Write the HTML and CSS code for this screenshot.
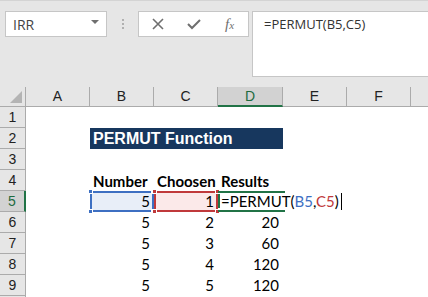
FILE: index.html
```html
<!DOCTYPE html>
<html>
<head>
    <meta charset="UTF-8">
    <title>PERMUT</title>
    <link rel="stylesheet" href="styles.css">
</head>
<body>
    <div class="toolbar">
        <div class="nameBox">
            <span>IRR</span>
            <span class="arrow"></span>
        </div>
        <div class="dots"><i></i><i></i><i></i></div>
        <div class="iconBox">
            <svg width="14" height="14" viewBox="0 0 14 14"><path d="M2 2L12 12M12 2L2 12" stroke="#6f6f6f" stroke-width="1.6" fill="none"/></svg>
            <svg width="16" height="14" viewBox="0 0 16 14"><path d="M2 7L6 11L14 3" stroke="#6f6f6f" stroke-width="2" fill="none"/></svg>
            <span class="fx">f<sub>x</sub></span>
        </div>
        <div class="formulaBox">=PERMUT(B5,C5)</div>
    </div>

    <div class="sheet">
        <!-- 列头 -->
        <div class="corner"><span></span></div>
        <div class="colHead">A</div>
        <div class="colHead">B</div>
        <div class="colHead">C</div>
        <div class="colHead sel">D</div>
        <div class="colHead">E</div>
        <div class="colHead">F</div>
        <div class="colHead rest"></div>

        <!-- 1 -->
        <div class="rowHead">1</div>
        <div class="cell"></div><div class="cell"></div><div class="cell"></div><div class="cell"></div><div class="cell"></div><div class="cell"></div><div class="cell"></div>

        <!-- 2 -->
        <div class="rowHead">2</div>
        <div class="cell"></div>
        <div class="cell title">PERMUT Function</div>
        <div class="cell"></div><div class="cell"></div><div class="cell"></div>

        <!-- 3 -->
        <div class="rowHead">3</div>
        <div class="cell"></div><div class="cell"></div><div class="cell"></div><div class="cell"></div><div class="cell"></div><div class="cell"></div><div class="cell"></div>

        <!-- 4 -->
        <div class="rowHead">4</div>
        <div class="cell"></div>
        <div class="cell head">Number</div>
        <div class="cell head">Choosen</div>
        <div class="cell head">Results</div>
        <div class="cell"></div><div class="cell"></div><div class="cell"></div>

        <!-- 5 -->
        <div class="rowHead sel">5</div>
        <div class="cell"></div>
        <div class="cell num refB">5<i class="h tl"></i><i class="h tr"></i><i class="h bl"></i><i class="h br"></i></div>
        <div class="cell num refC">1<i class="h tl"></i><i class="h tr"></i><i class="h bl"></i><i class="h br"></i></div>
        <div class="cell edit">=PERMUT(<b class="blue">B5</b>,<b class="red">C5</b>)<span class="caret"></span></div>
        <div class="cell"></div><div class="cell"></div>

        <!-- 6 -->
        <div class="rowHead">6</div>
        <div class="cell"></div>
        <div class="cell num">5</div><div class="cell num">2</div><div class="cell num">20</div>
        <div class="cell"></div><div class="cell"></div><div class="cell"></div>

        <!-- 7 -->
        <div class="rowHead">7</div>
        <div class="cell"></div>
        <div class="cell num">5</div><div class="cell num">3</div><div class="cell num">60</div>
        <div class="cell"></div><div class="cell"></div><div class="cell"></div>

        <!-- 8 -->
        <div class="rowHead">8</div>
        <div class="cell"></div>
        <div class="cell num">5</div><div class="cell num">4</div><div class="cell num">120</div>
        <div class="cell"></div><div class="cell"></div><div class="cell"></div>

        <!-- 9 -->
        <div class="rowHead">9</div>
        <div class="cell"></div>
        <div class="cell num">5</div><div class="cell num">5</div><div class="cell num">120</div>
        <div class="cell"></div><div class="cell"></div><div class="cell"></div>

        <!-- 10 -->
        <div class="rowHead"></div>
        <div class="cell"></div><div class="cell"></div><div class="cell"></div><div class="cell"></div><div class="cell"></div><div class="cell"></div><div class="cell"></div>
    </div>
</body>
</html>
```

FILE: styles.css
```css
*{
    padding: 0;
    margin: 0;
    box-sizing: border-box;
}
body{
    width: 428px;
    height: 297px;
    overflow: hidden;
    background: #fff;
    font-family: "Lato", "Liberation Sans", sans-serif;
}
.toolbar{
    height: 87px;
    background: #e6e6e6;
    border-top: 1px solid #d4d4d4;
    display: flex;
    align-items: flex-start;
    padding-top: 10px;
    padding-left: 5px;
}
.nameBox{
    width: 102px;
    height: 26px;
    background: #fff;
    border: 1px solid #c6c6c6;
    display: flex;
    align-items: center;
    justify-content: space-between;
    padding: 0 7px 0 7px;
    font-family: "Open Sans", sans-serif;
    font-size: 14px;
    color: #444;
}
.nameBox .arrow{
    width: 0;
    height: 0;
    border-left: 4px solid transparent;
    border-right: 4px solid transparent;
    border-top: 4px solid #6f6f6f;
    margin-top: -4px;
}
.dots{
    width: 31px;
    height: 26px;
    display: flex;
    flex-direction: column;
    align-items: center;
    justify-content: center;
    gap: 2px;
}
.dots i{
    width: 2px;
    height: 2px;
    background: #b0b0b0;
}
.iconBox{
    width: 111px;
    height: 26px;
    background: #fff;
    border: 1px solid #c6c6c6;
    display: flex;
    align-items: center;
    gap: 21px;
    padding-left: 12px;
}
.fx{
    font-family: "Liberation Serif", serif;
    font-style: italic;
    font-size: 15px;
    color: #6f6f6f;
    line-height: 1;
    margin-left: 2px;
}
.fx sub{
    font-size: 11px;
    vertical-align: 0;
}
.formulaBox{
    flex: 1;
    margin-left: 3px;
    height: 66px;
    background: #fff;
    border: 1px solid #c6c6c6;
    border-right: none;
    padding: 3px 0 0 11px;
    font-family: "Open Sans", sans-serif;
    font-size: 13px;
    color: #333;
}
.sheet{
    height: 210px;
    overflow: hidden;
    display: grid;
    grid-template-columns: 26px 64px 64px 64px 65px 64px 64px 1fr;
    grid-auto-rows: 21px;
    grid-template-rows: 20px;
}
.corner{
    background: #e6e6e6;
    border-right: 1px solid #ababab;
    border-bottom: 1px solid #ababab;
    position: relative;
}
.corner span{
    position: absolute;
    right: 3px;
    bottom: 3px;
    width: 0;
    height: 0;
    border-left: 12px solid transparent;
    border-bottom: 12px solid #b4b4b4;
}
.colHead{
    background: #e6e6e6;
    border-right: 1px solid #ababab;
    border-bottom: 1px solid #ababab;
    text-align: center;
    font-size: 14px;
    line-height: 19px;
    color: #222;
    font-family: "Liberation Sans", sans-serif;
}
.colHead.sel{
    background: #d2d2d2;
    border-bottom: 2px solid #217346;
    color: #1e6b3f;
}
.colHead.rest{
    border-right: none;
}
.rowHead{
    background: #e6e6e6;
    border-right: 1px solid #ababab;
    border-bottom: 1px solid #ababab;
    text-align: center;
    font-size: 14px;
    line-height: 20px;
    color: #222;
    font-family: "Liberation Sans", sans-serif;
}
.rowHead.sel{
    background: #d2d2d2;
    border-right: 2px solid #217346;
    color: #1e6b3f;
}
.cell{
    font-size: 15px;
    line-height: 21px;
    color: #000;
    white-space: nowrap;
    position: relative;
}
.title{
    grid-column: span 3;
    background: #17375e;
    color: #fff;
    font-weight: bold;
    padding-left: 3px;
    font-family: "Liberation Sans", sans-serif;
    font-size: 16px;
    line-height: 21px;
}
.head{
    font-weight: bold;
    padding-left: 3px;
    line-height: 23px;
}
.num{
    text-align: right;
    padding-right: 4px;
}
.refB{
    background: #e8eef8;
    border: 2px solid #3d6fc2;
    line-height: 17px;
    padding-right: 2px;
}
.refC{
    background: #fbe9e9;
    border: 2px solid #c0393b;
    line-height: 17px;
    padding-right: 2px;
}
.h{
    position: absolute;
    width: 5px;
    height: 5px;
    border: 1px solid #fff;
}
.refB .h{ background: #3d6fc2; }
.refC .h{ background: #c0393b; }
.tl{ left: -4px; top: -4px; }
.tr{ right: -4px; top: -4px; }
.bl{ left: -4px; bottom: -4px; }
.br{ right: -4px; bottom: -4px; }
.edit{
    grid-column: span 2;
    padding-left: 3px;
    line-height: 21px;
}
.edit::before{
    content: "";
    position: absolute;
    left: 0;
    right: 62px;
    top: 0;
    bottom: 0;
    border-top: 2px solid #217346;
    border-bottom: 2px solid #217346;
}
.edit::after{
    content: "";
    position: absolute;
    left: 0;
    top: 3px;
    width: 2px;
    height: 14px;
    background: #217346;
}
.edit b{
    font-weight: normal;
}
.blue{ color: #3d6fc2; }
.red{ color: #c0393b; }
.caret{
    display: inline-block;
    width: 1px;
    height: 17px;
    background: #000;
    vertical-align: -3px;
    margin-left: 2px;
}
```
